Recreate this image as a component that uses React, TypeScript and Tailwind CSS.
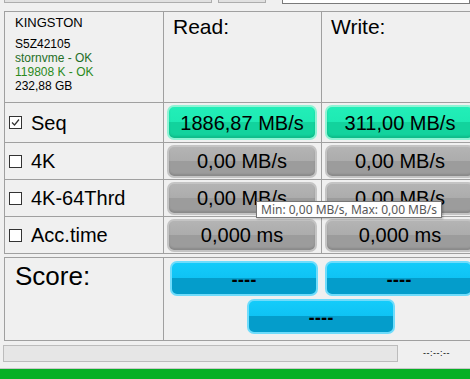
import React from 'react';

type Tone = 'green' | 'gray' | 'blue';

const toneClass: Record<Tone, string> = {
  green:
    'border-[#8ff3d4] bg-[linear-gradient(to_bottom,#22eeb8_0%,#1eeab3_48%,#12d39d_48%,#12d39d_100%)] shadow-[inset_0_-2px_2px_rgba(0,120,80,0.25)]',
  gray: 'border-[#c4c4c4] bg-[linear-gradient(to_bottom,#b4b4b4_0%,#acacac_48%,#9c9c9c_48%,#9c9c9c_100%)] shadow-[inset_0_-2px_2px_rgba(0,0,0,0.12)]',
  blue: 'border-[#6fdcfb] bg-[linear-gradient(to_bottom,#14cbfa_0%,#0fc3f4_48%,#049dcb_48%,#049dcb_100%)] shadow-[inset_0_-2px_2px_rgba(0,60,110,0.2)]',
};

const Pill = ({ tone, text, className = '' }: { tone: Tone; text: string; className?: string }) => (
  <div
    className={`flex items-center justify-center rounded-[7px] border-2 text-[20px] text-black leading-none ${toneClass[tone]} ${className}`}>
    {text}
  </div>
);

const Dash = () => (
  <div className="flex items-center justify-center rounded-[7px] border-2 w-[148px] h-[35px] border-[#6fdcfb] bg-[linear-gradient(to_bottom,#14cbfa_0%,#0fc3f4_48%,#049dcb_48%,#049dcb_100%)]">
    <span className="mt-[4px] text-[15px] font-bold tracking-[0px] text-black leading-none font-['DejaVu_Sans',sans-serif]">----</span>
  </div>
);

const CheckBox = ({ checked }: { checked?: boolean }) => (
  <div className="w-[13px] h-[13px] border border-[#333] bg-white flex items-center justify-center">
    {checked ? (
      <svg width="9" height="9" viewBox="0 0 9 9">
        <path d="M1 4.5 L3.5 7 L8 1.5" fill="none" stroke="#333" strokeWidth="1.2" />
      </svg>
    ) : undefined}
  </div>
);

const rows = [
  { label: 'Seq', checked: true, read: '1886,87 MB/s', write: '311,00 MB/s', tone: 'green' as Tone },
  { label: '4K', checked: false, read: '0,00 MB/s', write: '0,00 MB/s', tone: 'gray' as Tone },
  { label: '4K-64Thrd', checked: false, read: '0,00 MB/s', write: '0,00 MB/s', tone: 'gray' as Tone },
  { label: 'Acc.time', checked: false, read: '0,000 ms', write: '0,000 ms', tone: 'gray' as Tone },
];

const cell = 'border-r border-b border-[#a0a0a0]';

export default function App() {
  return (
    <div className="relative w-[470px] h-[379px] overflow-hidden bg-[#f0f0f0] flex flex-col font-['Liberation_Sans',Arial,sans-serif]">
      <div className="h-[11px] flex items-start shrink-0">
        <div className="ml-[4px] w-[221px] h-[3px] border border-t-0 border-[#adadad] bg-[#e1e1e1]" />
        <div className="ml-[6px] w-[50px] h-[3px] border border-t-0 border-[#adadad] bg-[#e1e1e1]" />
        <div className="ml-[16px] w-[200px] h-[4px] border border-t-0 border-[#7a7a7a] bg-white" />
      </div>

      <div className="ml-[4px] w-[480px] shrink-0 grid grid-cols-[159px_158px_1fr] grid-rows-[91px_40px_37px_37px_37px] border-l border-t border-[#a0a0a0]">
        <div className={`${cell} pl-[10px] pt-[3px] text-black`}>
          <div className="text-[13px] leading-[16px]">KINGSTON</div>
          <div className="mt-[6px] text-[12px] leading-[14px]">
            <div>S5Z42105</div>
            <div className="text-[#1f6e27]">stornvme - OK</div>
            <div className="text-[#2b8a1c]">119808 K - OK</div>
            <div>232,88 GB</div>
          </div>
        </div>
        <div className={`${cell} pl-[9px] pt-[3px] text-[21px] leading-[24px]`}>Read:</div>
        <div className={`${cell} pl-[9px] pt-[3px] text-[21px] leading-[24px]`}>Write:</div>

        {rows.map((r) => (
          <React.Fragment key={r.label}>
            <div className={`${cell} flex items-center pl-[4px] gap-[9px]`}>
              <CheckBox checked={r.checked} />
              <span className="text-[20px] leading-none">{r.label}</span>
            </div>
            <div className={`${cell} flex items-center pl-[3px]`}>
              <Pill tone={r.tone} text={r.read} className={r.tone === 'green' ? 'w-[150px] h-[35px]' : 'w-[150px] h-[33px]'} />
            </div>
            <div className={`${cell} flex items-center pl-[3px]`}>
              <Pill tone={r.tone} text={r.write} className={r.tone === 'green' ? 'w-[150px] h-[35px]' : 'w-[150px] h-[33px]'} />
            </div>
          </React.Fragment>
        ))}
      </div>

      <div className="ml-[4px] mt-[3px] w-[480px] h-[84px] shrink-0 grid grid-cols-[159px_1fr] border-l border-t border-b border-[#a0a0a0]">
        <div className="border-r border-[#a0a0a0] pl-[10px] pt-[3px] text-[26px] leading-[30px]">Score:</div>
        <div className="pl-[6px] pt-[3px] flex flex-col gap-[3px]">
          <div className="flex gap-[7px]">
            <Dash />
            <Dash />
          </div>
          <div className="ml-[77px]">
            <Dash />
          </div>
        </div>
      </div>

      <div className="mt-[4px] flex items-center shrink-0">
        <div className="ml-[3px] w-[395px] h-[17px] border border-[#bcbcbc] bg-[#e6e6e6]" />
        <span className="ml-[25px] text-[9px] leading-none tracking-[0.5px] text-black">--:--:--</span>
      </div>

      <div className="mt-auto h-[11px] border-t border-[#c8c8c8] bg-[#06b025]" />

      <div className="absolute left-[256px] top-[201px] h-[17px] px-[4px] flex items-center bg-white border border-[#767676] shadow-[1px_1px_2px_rgba(0,0,0,0.25)] text-[12px] text-[#575757] font-['Noto_Sans','Open_Sans',sans-serif] leading-none whitespace-nowrap">
        Min: 0,00 MB/s, Max: 0,00 MB/s
      </div>
    </div>
  );
}
